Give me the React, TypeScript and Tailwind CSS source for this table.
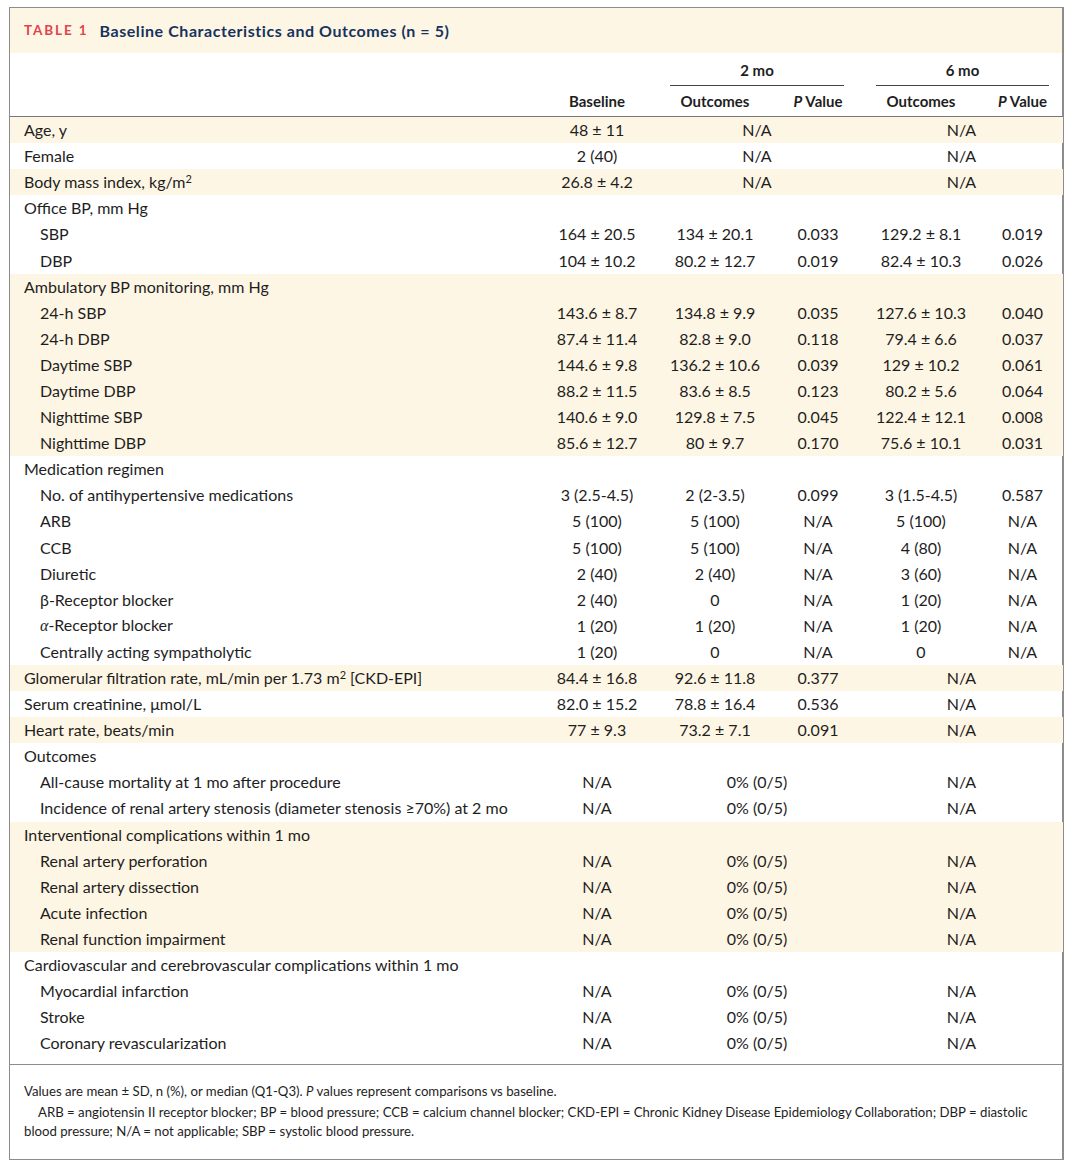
import type { ReactNode } from "react";

type Cell = string | { v: string; span: 2 };
type Row = { label: ReactNode; sub?: boolean; cells?: Cell[]; shade?: boolean };

const pm = (a: string, b: string) => `${a} \u00b1 ${b}`;
const na2: Cell = { v: "N/A", span: 2 };
const zero2: Cell = { v: "0% (0/5)", span: 2 };

const rows: Row[] = [
  { label: "Age, y", cells: [pm("48", "11"), na2, na2], shade: true },
  { label: "Female", cells: ["2 (40)", na2, na2] },
  {
    label: (
      <>
        Body mass index, kg/m<sup className="text-[11px] leading-none">2</sup>
      </>
    ),
    cells: [pm("26.8", "4.2"), na2, na2],
    shade: true
  },
  { label: "Office BP, mm Hg" },
  { label: "SBP", sub: true, cells: [pm("164", "20.5"), pm("134", "20.1"), "0.033", pm("129.2", "8.1"), "0.019"] },
  { label: "DBP", sub: true, cells: [pm("104", "10.2"), pm("80.2", "12.7"), "0.019", pm("82.4", "10.3"), "0.026"] },
  { label: "Ambulatory BP monitoring, mm Hg", shade: true },
  { label: "24-h SBP", sub: true, shade: true, cells: [pm("143.6", "8.7"), pm("134.8", "9.9"), "0.035", pm("127.6", "10.3"), "0.040"] },
  { label: "24-h DBP", sub: true, shade: true, cells: [pm("87.4", "11.4"), pm("82.8", "9.0"), "0.118", pm("79.4", "6.6"), "0.037"] },
  { label: "Daytime SBP", sub: true, shade: true, cells: [pm("144.6", "9.8"), pm("136.2", "10.6"), "0.039", pm("129", "10.2"), "0.061"] },
  { label: "Daytime DBP", sub: true, shade: true, cells: [pm("88.2", "11.5"), pm("83.6", "8.5"), "0.123", pm("80.2", "5.6"), "0.064"] },
  { label: "Nighttime SBP", sub: true, shade: true, cells: [pm("140.6", "9.0"), pm("129.8", "7.5"), "0.045", pm("122.4", "12.1"), "0.008"] },
  { label: "Nighttime DBP", sub: true, shade: true, cells: [pm("85.6", "12.7"), pm("80", "9.7"), "0.170", pm("75.6", "10.1"), "0.031"] },
  { label: "Medication regimen" },
  { label: "No. of antihypertensive medications", sub: true, cells: ["3 (2.5-4.5)", "2 (2-3.5)", "0.099", "3 (1.5-4.5)", "0.587"] },
  { label: "ARB", sub: true, cells: ["5 (100)", "5 (100)", "N/A", "5 (100)", "N/A"] },
  { label: "CCB", sub: true, cells: ["5 (100)", "5 (100)", "N/A", "4 (80)", "N/A"] },
  { label: "Diuretic", sub: true, cells: ["2 (40)", "2 (40)", "N/A", "3 (60)", "N/A"] },
  { label: "\u03b2-Receptor blocker", sub: true, cells: ["2 (40)", "0", "N/A", "1 (20)", "N/A"] },
  {
    label: (
      <>
        <span className="italic font-['Liberation_Serif',serif]">{"\u03b1"}</span>-Receptor blocker
      </>
    ),
    sub: true,
    cells: ["1 (20)", "1 (20)", "N/A", "1 (20)", "N/A"]
  },
  { label: "Centrally acting sympatholytic", sub: true, cells: ["1 (20)", "0", "N/A", "0", "N/A"] },
  {
    label: (
      <>
        Glomerular filtration rate, mL/min per 1.73 m<sup className="text-[11px] leading-none">2</sup> [CKD-EPI]
      </>
    ),
    cells: [pm("84.4", "16.8"), pm("92.6", "11.8"), "0.377", na2],
    shade: true
  },
  { label: "Serum creatinine, \u03bcmol/L", cells: [pm("82.0", "15.2"), pm("78.8", "16.4"), "0.536", na2] },
  { label: "Heart rate, beats/min", cells: [pm("77", "9.3"), pm("73.2", "7.1"), "0.091", na2], shade: true },
  { label: "Outcomes" },
  { label: "All-cause mortality at 1 mo after procedure", sub: true, cells: ["N/A", zero2, na2] },
  { label: "Incidence of renal artery stenosis (diameter stenosis \u226570%) at 2 mo", sub: true, cells: ["N/A", zero2, na2] },
  { label: "Interventional complications within 1 mo", shade: true },
  { label: "Renal artery perforation", sub: true, shade: true, cells: ["N/A", zero2, na2] },
  { label: "Renal artery dissection", sub: true, shade: true, cells: ["N/A", zero2, na2] },
  { label: "Acute infection", sub: true, shade: true, cells: ["N/A", zero2, na2] },
  { label: "Renal function impairment", sub: true, shade: true, cells: ["N/A", zero2, na2] },
  { label: "Cardiovascular and cerebrovascular complications within 1 mo" },
  { label: "Myocardial infarction", sub: true, cells: ["N/A", zero2, na2] },
  { label: "Stroke", sub: true, cells: ["N/A", zero2, na2] },
  { label: "Coronary revascularization", sub: true, cells: ["N/A", zero2, na2] }
];

export default function App() {
  return (
    <div className="min-h-screen bg-white pt-[7px] pl-[9px] font-['Lato',sans-serif] text-[#1e1e1e]">
      <div className="w-[1055px] border border-r-2 border-[#8c8c8c]">
        <div className="h-[45px] bg-[#fef6e4] flex items-center px-[14px] gap-[11px]">
          <span className="text-[13.5px] font-bold tracking-[0.14em] text-[#e2434f]">TABLE 1</span>
          <span className="text-[16px] font-bold tracking-[0.035em] text-[#16335e]">
            Baseline Characteristics and Outcomes (n = 5)
          </span>
        </div>

        <table className="w-full border-collapse table-fixed text-[16px]">
          <colgroup>
            <col className="w-[530px]" />
            <col className="w-[114px]" />
            <col className="w-[122px]" />
            <col className="w-[84px]" />
            <col className="w-[122px]" />
            <col className="w-[81px]" />
          </colgroup>
          <thead className="text-[15px] font-bold leading-[18px]">
            <tr className="h-[33px]">
              <th />
              <th />
              <th colSpan={2} className="align-top pt-[8px] px-[16px] font-bold">
                <div className="border-b border-[#444] pb-[6px]">2 mo</div>
              </th>
              <th colSpan={2} className="align-top pt-[8px] pl-[16px] pr-[14px] font-bold">
                <div className="border-b border-[#444] pb-[6px]">6 mo</div>
              </th>
            </tr>
            <tr className="h-[30px] border-b border-[#777]">
              <th />
              <th className="font-bold">Baseline</th>
              <th className="font-bold">Outcomes</th>
              <th className="font-bold">
                <i>P</i> Value
              </th>
              <th className="font-bold">Outcomes</th>
              <th className="font-bold">
                <i>P</i> Value
              </th>
            </tr>
          </thead>
          <tbody>
            <tr className="h-[1px]">
              <td colSpan={6} />
            </tr>
            {rows.map((r, i) => (
              <tr key={i} className={`h-[26.1px] ${r.shade ? "bg-[#fef6e4]" : ""}`}>
                <td className={`${r.sub ? "pl-[30px]" : "pl-[14px]"} whitespace-nowrap`}>{r.label}</td>
                {(r.cells ?? ["", "", "", "", ""]).map((c, j) =>
                  typeof c === "string" ? (
                    <td key={j} className="text-center whitespace-nowrap">
                      {c}
                    </td>
                  ) : (
                    <td key={j} colSpan={2} className="text-center whitespace-nowrap">
                      {c.v}
                    </td>
                  )
                )}
              </tr>
            ))}
            <tr className="h-[8px]">
              <td colSpan={6} />
            </tr>
          </tbody>
        </table>

        <div className="border-t border-[#8c8c8c] px-[14px] pt-[16px] pb-[18px] text-[13.2px] leading-[20px]">
          <p className="mb-[2px]">
            Values are mean ± SD, n (%), or median (Q1-Q3). <i>P</i> values represent comparisons vs baseline.
          </p>
          <p className="indent-[14px] leading-[19px]">
            ARB = angiotensin II receptor blocker; BP = blood pressure; CCB = calcium channel blocker; CKD-EPI = Chronic
            Kidney Disease Epidemiology Collaboration; DBP = diastolic blood pressure; N/A = not applicable; SBP =
            systolic blood pressure.
          </p>
        </div>
      </div>
    </div>
  );
}
